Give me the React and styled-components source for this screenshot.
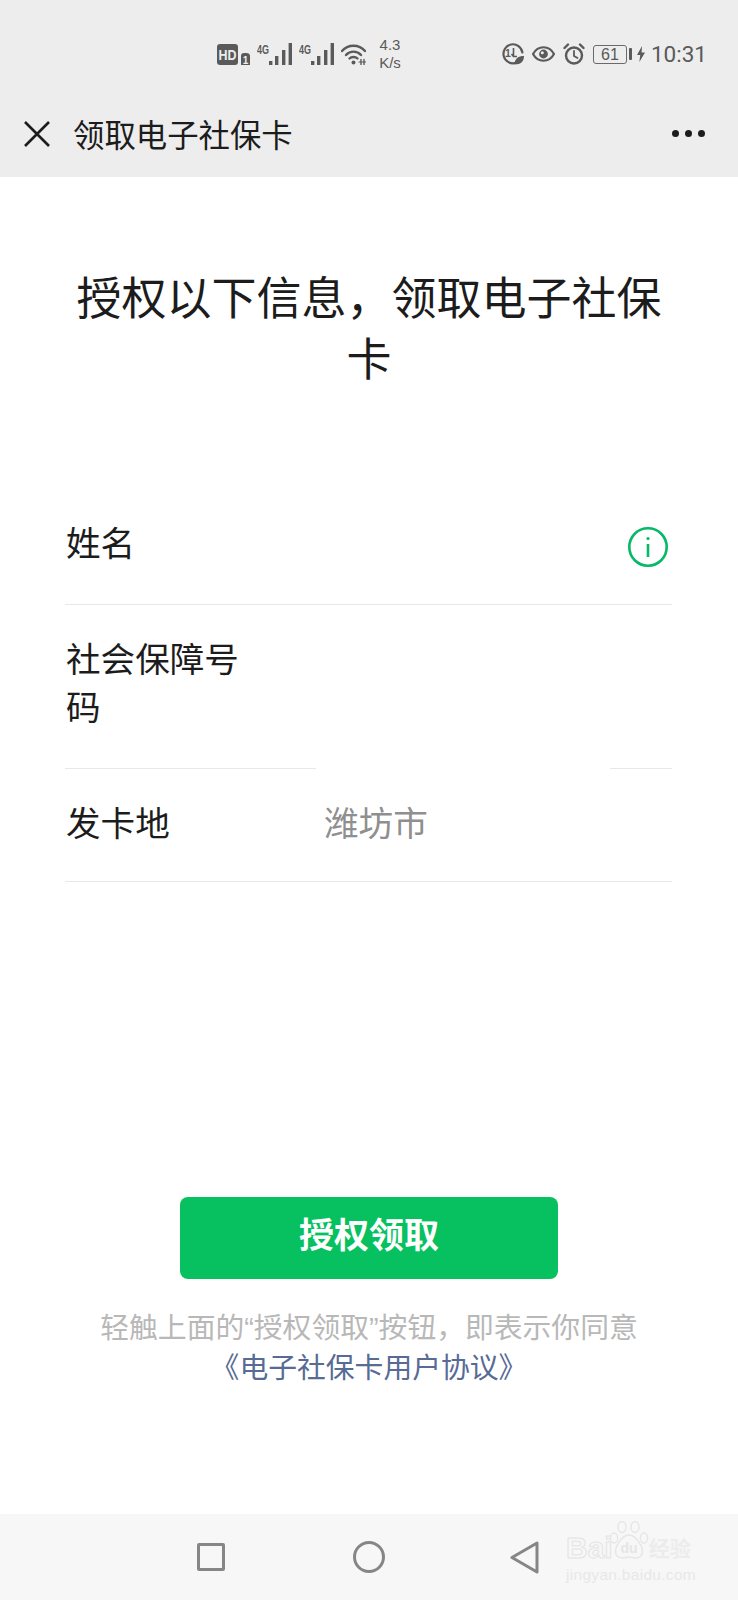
import React from 'react';
import styled, { createGlobalStyle } from 'styled-components';

const GlobalStyle = createGlobalStyle`
    html, body {
        margin: 0;
        padding: 0;
        background: #fff;
    }
    body {
        font-family: "Liberation Sans", "Noto Sans CJK SC", sans-serif;
    }
`;

function HdIcon() {
    return (
        <svg width="33" height="21" viewBox="0 0 33 21">
            <rect x="0" y="0" width="21" height="21" rx="3" fill="#5a5a5a" />
            <text x="10.5" y="15.5" fontSize="14" fontWeight="700" textAnchor="middle" fill="#ededed" fontFamily="Liberation Sans" textLength="18" lengthAdjust="spacingAndGlyphs">HD</text>
            <path d="M24 12 Q24 9 27 9 H29 Q33 9 33 12 V21 H24 Z" fill="#5a5a5a" />
            <text x="28.5" y="19.5" fontSize="10" fontWeight="700" textAnchor="middle" fill="#ededed" fontFamily="Liberation Sans">1</text>
        </svg>
    );
}

function SignalIcon() {
    return (
        <svg width="35" height="22" viewBox="0 0 35 22">
            <text x="0" y="11" fontSize="12.5" fontWeight="700" fill="#5a5a5a" fontFamily="Liberation Sans" textLength="12" lengthAdjust="spacingAndGlyphs">4G</text>
            <rect x="12" y="18" width="3.4" height="4" fill="#5a5a5a" />
            <rect x="18" y="13" width="3.4" height="9" fill="#5a5a5a" />
            <rect x="25" y="7" width="3.4" height="15" fill="#5a5a5a" />
            <rect x="31.6" y="0" width="3.4" height="22" fill="#5a5a5a" />
        </svg>
    );
}

function WifiIcon() {
    return (
        <svg width="25" height="21" viewBox="0 0 25 21" fill="none" stroke="#5a5a5a" strokeWidth="2.4" strokeLinecap="round">
            <path d="M1 7 C7 0 18 0 24 7" />
            <path d="M5 11 C9 6.5 16 6.5 20 11" />
            <path d="M8.5 14.5 C10.5 12.5 14.5 12.5 16.5 14.5" />
            <circle cx="12.5" cy="18.5" r="2" fill="#5a5a5a" stroke="none" />
            <path d="M18 18 H25" strokeWidth="1.2" />
            <path d="M20 15.5 V20.5 M23 15.5 V20.5" strokeWidth="1.4" />
        </svg>
    );
}

function SaverIcon() {
    return (
        <svg width="22" height="22" viewBox="0 0 22 22">
            <path d="M14 19.8 A9.5 9.5 0 1 1 20.4 9.5" fill="none" stroke="#5a5a5a" strokeWidth="2.2" strokeLinecap="round" />
            <text x="6" y="14" fontSize="10.5" fontWeight="700" textAnchor="middle" fill="#5a5a5a" fontFamily="Liberation Sans">1</text>
            <path d="M11.5 5 V13.5 H15 M9.5 11 L11.5 13.5" fill="none" stroke="#5a5a5a" strokeWidth="1.6" />
            <path d="M12.5 21.5 C12.5 15.5 16.5 13 22 13 C22 18 19 21.5 12.5 21.5 Z" fill="#5a5a5a" />
        </svg>
    );
}

function EyeIcon() {
    return (
        <svg width="23" height="16" viewBox="0 0 23 16">
            <path d="M1 8 C6 -1 17 -1 22 8 C17 17 6 17 1 8 Z" fill="none" stroke="#5a5a5a" strokeWidth="2.2" />
            <circle cx="11.5" cy="8" r="4.4" fill="#5a5a5a" />
            <circle cx="10.3" cy="6.8" r="1.5" fill="#ededed" />
        </svg>
    );
}

function AlarmIcon() {
    return (
        <svg width="22" height="22" viewBox="0 0 22 22" fill="none" stroke="#5a5a5a" strokeWidth="2.4" strokeLinecap="round">
            <circle cx="11" cy="12.5" r="8" />
            <path d="M11 8 V13 L14.5 15" strokeWidth="1.8" />
            <path d="M1.5 5 L5 1.5 M20.5 5 L17 1.5" />
        </svg>
    );
}

function BoltIcon() {
    return (
        <svg width="8" height="16" viewBox="0 0 8 16">
            <path d="M5 0 L0 9 H3.2 L2.4 16 L8 6.5 H4.6 Z" fill="#5a5a5a" />
        </svg>
    );
}

function CloseIcon() {
    return (
        <svg width="26" height="26" viewBox="0 0 26 26" fill="none" stroke="#1c1c1c" strokeWidth="2.6">
            <path d="M1 1 L25 25 M25 1 L1 25" />
        </svg>
    );
}

function InfoIcon() {
    return (
        <svg width="40" height="40" viewBox="0 0 40 40" fill="none" stroke="#07b866" strokeWidth="2.6">
            <circle cx="20" cy="20" r="18.7" />
            <path d="M20 17 V30" />
            <circle cx="20" cy="11.5" r="1.6" fill="#07b866" stroke="none" />
        </svg>
    );
}

function PawLogo() {
    return (
        <svg width="40" height="42" viewBox="0 0 40 42" fill="#f7f7f7" stroke="#e6e6e6" strokeWidth="1.4">
            <ellipse cx="5" cy="17" rx="3.6" ry="5" />
            <ellipse cx="13" cy="6" rx="4" ry="5.5" />
            <ellipse cx="26" cy="6" rx="4" ry="5.5" />
            <ellipse cx="35" cy="17" rx="3.6" ry="5" />
            <path d="M20 14 C27 14 37 28 32 35 C28 39 24 36 20 36 C16 36 12 39 8 35 C3 28 13 14 20 14 Z" />
            <text x="20" y="32" fontSize="14" fontWeight="700" textAnchor="middle" fill="#e6e6e6" stroke="none" fontFamily="Liberation Sans">du</text>
        </svg>
    );
}

export default function App() {
    return (
        <Page>
            <GlobalStyle />
            <Header>
                <StatusBar>
                    <StatusLeft>
                        <HdIcon />
                        <SignalIcon />
                        <SignalIcon />
                        <WifiIcon />
                        <NetSpeed>4.3<br />K/s</NetSpeed>
                    </StatusLeft>
                    <StatusRight>
                        <SaverIcon />
                        <EyeIcon />
                        <AlarmIcon />
                        <Battery>
                            <BatteryBody>61</BatteryBody>
                            <BatteryNub />
                        </Battery>
                        <BoltWrap><BoltIcon /></BoltWrap>
                        <Clock>10:31</Clock>
                    </StatusRight>
                </StatusBar>
                <Toolbar>
                    <CloseIcon />
                    <Title>领取电子社保卡</Title>
                    <MoreDots>
                        <Dot />
                        <Dot />
                        <Dot />
                    </MoreDots>
                </Toolbar>
            </Header>
            <Main>
                <Heading>授权以下信息，领取电子社保卡</Heading>
                <Form>
                    <Row $first>
                        <Label>姓名</Label>
                        <Value />
                        <InfoWrap><InfoIcon /></InfoWrap>
                    </Row>
                    <Row $tall $masked>
                        <Label>社会保障号码</Label>
                        <Value />
                    </Row>
                    <Row>
                        <Label>发卡地</Label>
                        <Value>潍坊市</Value>
                    </Row>
                </Form>
                <Footer>
                    <GrantButton>授权领取</GrantButton>
                    <Agreement>
                        轻触上面的“授权领取”按钮，即表示你同意
                        <br />
                        <AgreementLink>《电子社保卡用户协议》</AgreementLink>
                    </Agreement>
                </Footer>
            </Main>
            <NavBar>
                <NavSquare />
                <NavCircle />
                <NavBack width="29" height="33" viewBox="0 0 29 33" fill="none" stroke="#868686" strokeWidth="3" strokeLinejoin="round">
                    <path d="M27 2 V31 L2 16.5 Z" />
                </NavBack>
                <Watermark>
                    <WatermarkTop>
                        <WatermarkBrand>Bai</WatermarkBrand>
                        <PawLogo />
                        <WatermarkCn>经验</WatermarkCn>
                    </WatermarkTop>
                    <WatermarkUrl>jingyan.baidu.com</WatermarkUrl>
                </Watermark>
            </NavBar>
        </Page>
    );
}

const Page = styled.div`
    display: flex;
    flex-direction: column;
    width: 738px;
    height: 1600px;
    overflow: hidden;
    background: #fff;
    color: #1c1c1c;
`;

const Header = styled.header`
    background: #ededed;
`;

const StatusBar = styled.div`
    display: flex;
    align-items: center;
    justify-content: space-between;
    height: 90px;
    padding: 18px 31px 0 217px;
    box-sizing: border-box;
    color: #5a5a5a;
`;

const StatusLeft = styled.div`
    display: flex;
    align-items: center;
    gap: 7px;
`;

const StatusRight = styled.div`
    display: flex;
    align-items: center;
    gap: 8px;
`;

const NetSpeed = styled.div`
    margin-left: 4px;
    width: 26px;
    font-size: 15px;
    line-height: 18px;
    text-align: center;
`;

const Battery = styled.div`
    display: flex;
    align-items: center;
    gap: 2px;
`;

const BatteryBody = styled.div`
    width: 34px;
    height: 19px;
    box-sizing: border-box;
    border: 1px solid #6a6a6a;
    border-radius: 3px;
    font-size: 16px;
    line-height: 17px;
    text-align: center;
`;

const BatteryNub = styled.div`
    width: 3px;
    height: 12px;
    background: #5a5a5a;
    border-radius: 1px;
`;

const BoltWrap = styled.div`
    display: flex;
    margin-left: -3px;
`;

const Clock = styled.div`
    margin-left: -2px;
    font-family: Roboto, "Liberation Sans", sans-serif;
    font-size: 22.5px;
    line-height: 28px;
`;

const Toolbar = styled.div`
    display: flex;
    align-items: center;
    height: 87px;
    padding: 0 33px 0 24px;
`;

const Title = styled.div`
    flex: 1;
    margin-left: 23px;
    font-size: 31.4px;
    line-height: 40px;
    padding-top: 7px;
`;

const MoreDots = styled.div`
    display: flex;
    gap: 6px;
`;

const Dot = styled.span`
    width: 7px;
    height: 7px;
    border-radius: 50%;
    background: #1c1c1c;
`;

const Main = styled.main`
    flex: 1;
    display: flex;
    flex-direction: column;
    padding-top: 92px;
`;

const Heading = styled.h1`
    margin: 0;
    padding: 0 75px;
    font-size: 45px;
    font-weight: 400;
    line-height: 61px;
    text-align: center;
`;

const Form = styled.div`
    margin: 101px 66px 0 65px;
`;

const Row = styled.div`
    display: grid;
    grid-template-columns: 258px 1fr auto;
    align-items: start;
    padding: ${props => (props.$first ? '28px' : '31px')} 0 ${props => {
        if (props.$first) return '37px';
        return props.$tall ? '37px' : '34px';
    }} 1px;
    background: ${props => (props.$masked
        ? 'linear-gradient(to right, #e8e8e8 251px, #fff 251px, #fff 545px, #e8e8e8 545px)'
        : 'linear-gradient(#e8e8e8, #e8e8e8)')} bottom / 100% 1px no-repeat;
`;

const Label = styled.div`
    max-width: 176px;
    font-size: 34.6px;
    line-height: 48px;
`;

const Value = styled.div`
    font-size: 34.6px;
    line-height: 48px;
    color: #8f8f8f;
`;

const InfoWrap = styled.div`
    display: flex;
    margin: 7px 4px 0 0;
`;

const Footer = styled.div`
    margin-top: auto;
    padding-bottom: 126px;
    display: flex;
    flex-direction: column;
    align-items: center;
`;

const GrantButton = styled.button`
    width: 378px;
    height: 82px;
    padding: 0 0 12px;
    border: 0;
    border-radius: 8px;
    background: #07c160;
    color: #fff;
    font-family: inherit;
    font-size: 35px;
    font-weight: 700;
`;

const Agreement = styled.div`
    margin-top: 29px;
    font-size: 28.8px;
    line-height: 40px;
    text-align: center;
    color: #b8b8b8;
`;

const AgreementLink = styled.span`
    color: #576b95;
`;

const NavBar = styled.nav`
    position: relative;
    display: flex;
    align-items: center;
    gap: 127px;
    height: 86px;
    padding: 0 0 0 197px;
    background: #f7f7f7;
`;

const NavSquare = styled.div`
    width: 28px;
    height: 28px;
    box-sizing: border-box;
    border: 3px solid #868686;
    border-radius: 2px;
`;

const NavCircle = styled.div`
    width: 32px;
    height: 32px;
    box-sizing: border-box;
    margin-left: 1px;
    border: 3px solid #868686;
    border-radius: 50%;
`;

const NavBack = styled.svg`
    margin-left: -2px;
`;

const Watermark = styled.div`
    position: absolute;
    left: 566px;
    top: 5px;
    width: 134px;
    color: #e8e8e8;
`;

const WatermarkTop = styled.div`
    display: flex;
    align-items: flex-end;
    height: 44px;
`;

const WatermarkBrand = styled.span`
    margin-right: -4px;
    font-size: 30px;
    line-height: 30px;
    font-weight: 700;
    color: #f7f7f7;
    -webkit-text-stroke: 1px #e4e4e4;
`;

const WatermarkCn = styled.span`
    font-size: 21px;
    line-height: 28px;
    font-weight: 700;
    color: #ececec;
`;

const WatermarkUrl = styled.div`
    margin-top: 3px;
    font-size: 15.5px;
    line-height: 17px;
    letter-spacing: 0.3px;
    white-space: nowrap;
`;
